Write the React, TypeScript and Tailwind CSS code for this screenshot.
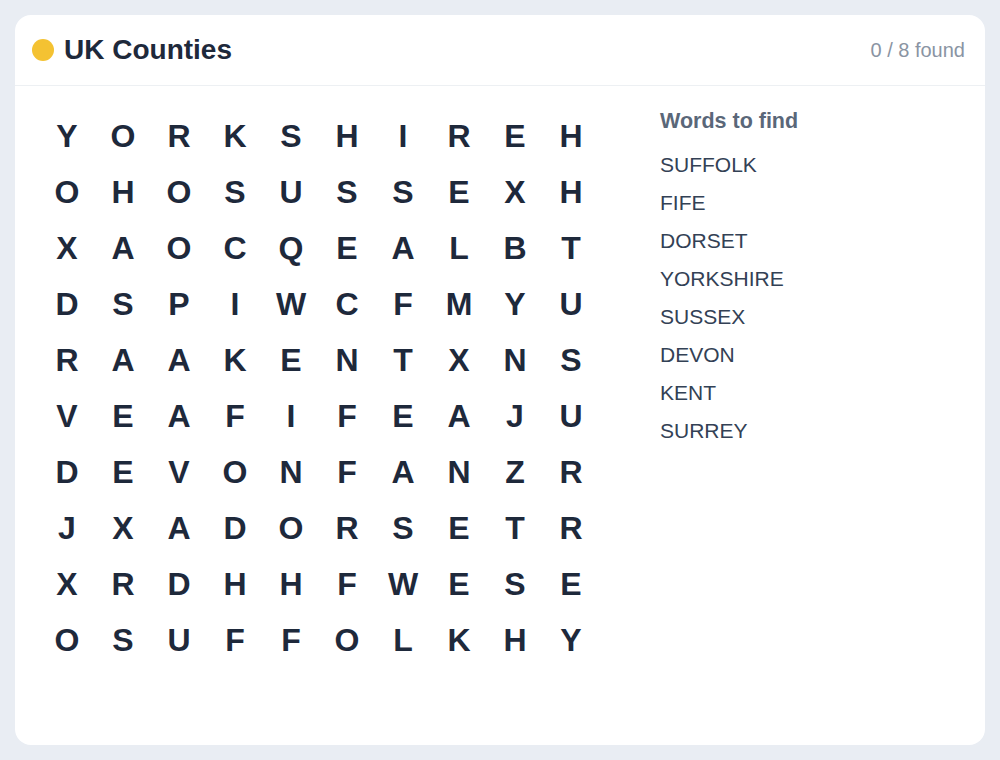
import React from 'react';

const grid = [
  'YORKSHIREH',
  'OHOSUSSEXH',
  'XAOCQEALBT',
  'DSPIWCFMYU',
  'RAAKENTXNS',
  'VEAFIFEAJU',
  'DEVONFANZR',
  'JXADORSETR',
  'XRDHHFWESE',
  'OSUFFOLKHY',
];

const words = ['SUFFOLK', 'FIFE', 'DORSET', 'YORKSHIRE', 'SUSSEX', 'DEVON', 'KENT', 'SURREY'];

export default function App() {
  return (
    <div
      className="min-h-screen bg-[#e9edf3] p-[15px]"
      style={{ fontFamily: '"Liberation Sans", Arial, sans-serif' }}
    >
      <div className="h-[730px] w-full rounded-[16px] bg-white flex flex-col">
        <div className="h-[71px] flex items-center justify-between pl-[17px] pr-5 border-b border-[#edf0f3]">
          <div className="flex items-center gap-[10px]">
            <span className="w-[22px] h-[22px] rounded-full bg-[#f4c232]" />
            <h1 className="text-[28px] font-bold text-[#1e293b] leading-none">UK Counties</h1>
          </div>
          <span className="text-[20px] text-[#8a94a3]">0 / 8 found</span>
        </div>

        <div className="flex pt-[22px] pl-[24px]">
          <div className="grid grid-cols-10">
            {grid.map((row, r) =>
              row.split('').map((ch, c) => (
                <div
                  key={`${r}-${c}`}
                  className="w-[56px] h-[56px] flex items-center justify-center text-[32px] font-bold text-[#1e293b] leading-none select-none"
                >
                  {ch}
                </div>
              ))
            )}
          </div>

          <div className="ml-[61px]">
            <h2 className="text-[21.5px] leading-[26px] font-bold text-[#5a6779]">Words to find</h2>
            <ul className="mt-[12px]">
              {words.map(word => (
                <li key={word} className="text-[21px] leading-[38px] text-[#334155]">
                  {word}
                </li>
              ))}
            </ul>
          </div>
        </div>
      </div>
    </div>
  );
}
